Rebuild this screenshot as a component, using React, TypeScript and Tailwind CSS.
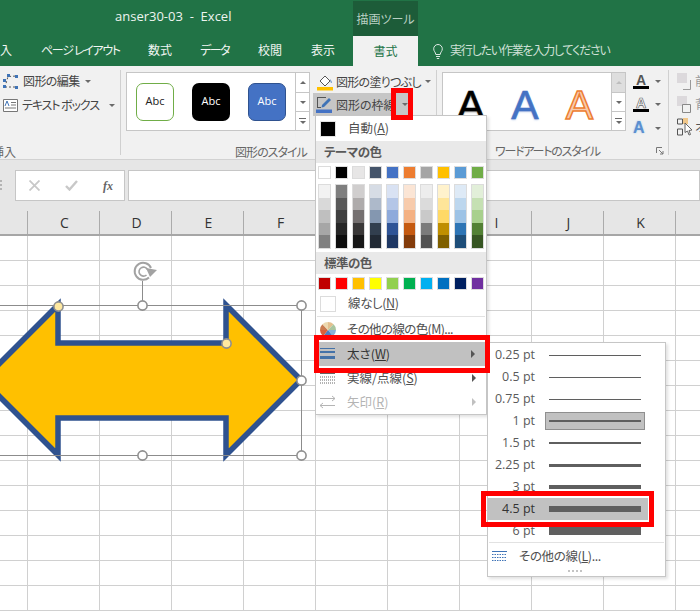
import React from 'react';

const THEME = ['#ffffff', '#000000', '#e7e6e6', '#44546a', '#4472c4', '#ed7d31', '#a5a5a5', '#ffc000', '#5b9bd5', '#70ad47'];
const SHADES = [
  ['#f2f2f2', '#d9d9d9', '#bfbfbf', '#a6a6a6', '#808080'],
  ['#7f7f7f', '#595959', '#3f3f3f', '#262626', '#0d0d0d'],
  ['#d0cece', '#aeabab', '#757070', '#3a3838', '#171717'],
  ['#d6dce5', '#adb9ca', '#8497b0', '#323f4f', '#222a35'],
  ['#d9e2f3', '#b4c6e7', '#8eaadb', '#2f5496', '#1f3864'],
  ['#fbe5d5', '#f7cbac', '#f4b183', '#c55a11', '#833c0b'],
  ['#ededed', '#dbdbdb', '#c9c9c9', '#7b7b7b', '#525252'],
  ['#fff2cc', '#fee599', '#ffd966', '#bf8f00', '#7f6000'],
  ['#deeaf6', '#bdd7ee', '#9dc3e6', '#2e75b5', '#1e4e79'],
  ['#e2efd9', '#c5e0b3', '#a8d08d', '#538135', '#375623'],
];
const STANDARD = ['#c00000', '#ff0000', '#ffc000', '#ffff00', '#92d050', '#00b050', '#00b0f0', '#0070c0', '#002060', '#7030a0'];
const WEIGHTS = [
  { label: '0.25 pt', h: 1 },
  { label: '0.5 pt', h: 1 },
  { label: '0.75 pt', h: 1 },
  { label: '1 pt', h: 2, boxed: true },
  { label: '1.5 pt', h: 2 },
  { label: '2.25 pt', h: 3 },
  { label: '3 pt', h: 4 },
  { label: '4.5 pt', h: 6, active: true },
  { label: '6 pt', h: 8 },
];
const COLUMNS = ['', 'C', 'D', 'E', 'F', 'G', 'H', 'I', 'J', 'K', ''];

function Caret({ className = '' }: { className?: string }) {
  return <span className={`block shrink-0 w-0 h-0 border-x-[3.5px] border-x-transparent border-t-[3.5px] border-t-[#6a6a6a] ${className}`} />;
}

function ScrollBtns({ firstDisabled }: { firstDisabled?: boolean }) {
  return (
    <div className="w-[14px] flex flex-col border-l border-[#c6c6c6] bg-white shrink-0">
      <div className={`h-[20px] flex items-center justify-center border-b border-[#c6c6c6] ${firstDisabled ? 'bg-[#dedede]' : ''}`}>
        <span className={`block w-0 h-0 border-x-[3.5px] border-x-transparent border-b-[3.5px] ${firstDisabled ? 'border-b-[#bdbdbd]' : 'border-b-[#6a6a6a]'}`} />
      </div>
      <div className="h-[19px] flex items-center justify-center border-b border-[#c6c6c6]">
        <Caret />
      </div>
      <div className="flex-1 flex flex-col items-center justify-center gap-[2px]">
        <span className="block w-[7px] h-px bg-[#6a6a6a]" />
        <Caret />
      </div>
    </div>
  );
}

function ThumbA({ className }: { className: string }) {
  return (
    <div className={`w-[38px] h-[38px] rounded-[7px] flex items-center justify-center text-[11px] font-['Open_Sans',sans-serif] ${className}`}>
      Abc
    </div>
  );
}

function MenuRow({ icon, label, arrow, muted, className = '' }: { icon: React.ReactNode; label: React.ReactNode; arrow?: boolean; muted?: boolean; className?: string }) {
  return (
    <div className={`flex items-center shrink-0 ${className}`}>
      <div className="w-[32px] flex justify-start pl-[4px] shrink-0">{icon}</div>
      <span className={`text-[12.5px] whitespace-nowrap ${muted ? 'text-[#b4b4b4]' : 'text-[#505050]'}`}>{label}</span>
      {arrow && (
        <span className={`ml-auto mr-[10px] block w-0 h-0 border-y-[4px] border-y-transparent border-l-[4px] ${muted ? 'border-l-[#c0c0c0]' : 'border-l-[#555]'}`} />
      )}
    </div>
  );
}

function MenuHeader({ children }: { children: React.ReactNode }) {
  return <div className="h-[22px] shrink-0 bg-[#e9e9e9] flex items-center pl-[8px] text-[12.5px] font-bold text-[#595959] tracking-[-0.04em]">{children}</div>;
}

function Swatch({ color }: { color: string }) {
  return <span className="block w-[13px] h-[13px] border border-[#dcdcdc]" style={{ background: color }} />;
}

function LineMenu() {
  return (
    <div className="absolute left-[487px] top-[342px] w-[179px] h-[235px] bg-white border border-[#c6c6c6] shadow-[2px_2px_3px_rgba(0,0,0,0.12)] flex flex-col pt-px">
      {WEIGHTS.map((w) => (
        <div key={w.label} className={`h-[22px] w-[160px] shrink-0 flex items-center ${w.active ? 'bg-[#c1c1c1]' : ''}`}>
          <span className={`w-[47px] text-right text-[12.5px] whitespace-nowrap font-['Open_Sans',sans-serif] ${w.active ? 'text-[#333]' : 'text-[#5a5a5a]'}`}>{w.label}</span>
          <div className={`ml-[10px] w-[100px] h-[18px] flex items-center justify-center ${w.boxed ? 'bg-[#c1c1c1] border border-[#8f8f8f]' : ''}`}>
            <span className="block w-[92px] bg-[#5f5f5f]" style={{ height: w.h }} />
          </div>
        </div>
      ))}
      <div className="h-px bg-[#e2e2e2] mx-px shrink-0" />
      <MenuRow
        className="h-[26px]"
        icon={
          <svg width="15" height="12" viewBox="0 0 15 12" className="shrink-0">
            <path d="M0 1.500h15" stroke="#3f73b6" strokeWidth="1" />
            <path d="M0 4.500h15M0 7.500h15M0 10.500h15" stroke="#3f73b6" strokeWidth="1" strokeDasharray="1.500 1" />
          </svg>
        }
        label={<span className="tracking-[-0.03em] ml-[-1px]">その他の線(<span className="underline">L</span>)...</span>}
      />
      <div className="flex justify-center gap-[2px] ml-[-4px] mt-[1px]">
        {[0, 1, 2, 3].map((i) => (
          <span key={i} className="block w-[2px] h-[2px] bg-[#c4c4c4]" />
        ))}
      </div>
    </div>
  );
}

function ColorMenu() {
  return (
    <div className="absolute left-[315px] top-[115px] w-[172px] h-[300px] bg-white border border-[#c6c6c6] shadow-[2px_2px_3px_rgba(0,0,0,0.12)] flex flex-col">
      <MenuRow
        className="h-[25px]"
        icon={<span className="block w-[16px] h-[16px] bg-black border border-[#e2e2e2]" />}
        label={<>自動(<span className="underline">A</span>)</>}
      />
      <MenuHeader>テーマの色</MenuHeader>
      <div className="flex gap-[4px] pl-[2px] mt-[3px]">
        {THEME.map((c) => (
          <Swatch key={c} color={c} />
        ))}
      </div>
      <div className="flex gap-[4px] pl-[2px] mt-[5px]">
        {SHADES.map((col) => (
          <div key={col[0]} className="w-[13px] h-[65px] flex flex-col border border-[#dcdcdc]">
            {col.map((c) => (
              <span key={c} className="block flex-1" style={{ background: c }} />
            ))}
          </div>
        ))}
      </div>
      <div className="mt-[3px]">
        <MenuHeader>標準の色</MenuHeader>
      </div>
      <div className="flex gap-[4px] pl-[2px] mt-[3px]">
        {STANDARD.map((c) => (
          <Swatch key={c} color={c} />
        ))}
      </div>
      <MenuRow
        className="h-[25px] mt-[1px]"
        icon={<span className="block w-[16px] h-[16px] bg-white border border-[#dcdcdc]" />}
        label={<span className="tracking-[-0.03em]">線なし(<span className="underline">N</span>)</span>}
      />
      <div className="h-px bg-[#e2e2e2] mx-px shrink-0" />
      <MenuRow
        className="h-[25px]"
        icon={
          <svg width="16" height="16" viewBox="0 0 16 16" className="shrink-0">
            <path d="M8 8V0a8 8 0 0 1 5.600 2.300z" fill="#e3c08f" />
            <path d="M8 8l5.600-5.700A8 8 0 0 1 16 8z" fill="#a9c6a0" />
            <path d="M8 8h8a8 8 0 0 1-3 6.200z" fill="#8ab1d8" />
            <path d="M8 8l5 6.200A8 8 0 0 1 3 14.200z" fill="#4f7fc0" />
            <path d="M8 8l-5 6.200A8 8 0 0 1 0 8z" fill="#d9603a" />
            <path d="M8 8H0a8 8 0 0 1 2.400-5.700z" fill="#c97b50" />
            <path d="M8 8L2.400 2.300A8 8 0 0 1 8 0z" fill="#ecd9b0" />
          </svg>
        }
        label={<span className="tracking-[-0.05em] ml-[-1px]">その他の線の色(<span className="underline">M</span>)...</span>}
      />
      <MenuRow
        className="h-[24px] bg-[#c1c1c1] mx-px"
        icon={
          <svg width="15" height="14" viewBox="0 0 15 14" className="shrink-0 ml-[-1px]">
            <path d="M0 1.500h15" stroke="#4472a8" strokeWidth="1" />
            <path d="M0 5h15" stroke="#4472a8" strokeWidth="2" />
            <path d="M0 10.500h15" stroke="#4472a8" strokeWidth="3" />
          </svg>
        }
        label={<span className="text-[#333] ml-[-2px]">太さ(<span className="underline">W</span>)</span>}
        arrow
      />
      <MenuRow
        className="h-[24px]"
        icon={
          <svg width="15" height="12" viewBox="0 0 15 12" className="shrink-0">
            <path d="M0 1.500h15" stroke="#666" />
            <path d="M0 5h15M0 8h15M0 11h15" stroke="#666" strokeDasharray="1 1" />
          </svg>
        }
        label={<span className="ml-[-1px]">実線/点線(<span className="underline">S</span>)</span>}
        arrow
      />
      <MenuRow
        className="h-[24px]"
        muted
        icon={
          <svg width="15" height="14" viewBox="0 0 15 14" fill="none" stroke="#b4b4b4" className="shrink-0">
            <path d="M0 3.500h15M12 1l3 2.500L12 6M0 10.500h15M3 8l-3 2.500L3 13" />
          </svg>
        }
        label={<span className="ml-[-1px]">矢印(<span className="underline">R</span>)</span>}
        arrow
      />
    </div>
  );
}

function Sheet() {
  const rows = Array.from({ length: 15 });
  return (
    <div className="flex-1 bg-white grid grid-cols-[28px_repeat(10,72px)] auto-rows-[25px] overflow-hidden">
      {rows.map((_, r) =>
        COLUMNS.map((_, c) => <div key={`${r}-${c}`} className="border-r border-b border-[#d0d0d0]" />)
      )}
    </div>
  );
}

function Selection() {
  const handles = [
    [142, 305],
    [301, 305],
    [301, 380],
    [142, 455],
    [301, 455],
  ];
  return (
    <svg className="absolute left-0 top-[250px]" width="320" height="225" viewBox="0 250 320 225">
      <path
        d="M301 380L226 305V343H58V305L-17 380L58 455V418H226V455Z"
        fill="#ffc000"
        stroke="#2f528f"
        strokeWidth="5.500"
      />
      <path d="M-2 305.500H301.500V455.500H-2M142.500 281V300" fill="none" stroke="#8c8c8c" />
      <path d="M149 277.500A8.500 8.500 0 1 1 151 268" fill="none" stroke="#a2a2a2" strokeWidth="2" />
      <path d="M146.500 275A4.500 4.500 0 1 1 147.500 269.500" fill="none" stroke="#a2a2a2" strokeWidth="1.600" />
      <path d="M157 270L146 268L150 277Z" fill="#a2a2a2" />
      {handles.map(([x, y]) => (
        <circle key={`${x}-${y}`} cx={x + 0.5} cy={y + 0.5} r="4.600" fill="#fff" stroke="#8f8f8f" strokeWidth="1.600" />
      ))}
      <circle cx="58.500" cy="306.500" r="4.600" fill="#ffe9a0" stroke="#8f8f8f" strokeWidth="1.600" />
      <circle cx="226.500" cy="343.500" r="4.600" fill="#ffe9a0" stroke="#8f8f8f" strokeWidth="1.600" />
    </svg>
  );
}

export default function App() {
  return (
    <div className="relative w-[700px] h-[611px] overflow-hidden flex flex-col bg-white font-['Noto_Sans_CJK_JP','Noto_Sans',sans-serif] [font-feature-settings:'palt'] text-[#444]">
      {/* title bar */}
      <div className="h-[66px] shrink-0 bg-[#217346] flex flex-col">
        <div className="h-[36px] flex">
          <span className="ml-[115px] mt-[7px] text-[13px] text-[#eef4f0] whitespace-pre font-['Open_Sans',sans-serif]">anser30-03  -  Excel</span>
          <div className="absolute left-[353px] top-px w-[65px] h-[35px] bg-[#1d5c39] flex items-center justify-center text-[12px] text-[#b9d0c3]">描画ツール</div>
        </div>
        <div className="h-[30px] flex items-center text-[12px] text-[#f1f6f3]">
          <span className="w-[12px] mt-[-2px]">入</span>
          <span className="ml-[29px] w-[78px] mt-[-2px] whitespace-nowrap tracking-[-0.11em]">ページ レイアウト</span>
          <span className="ml-[29px] w-[24px] mt-[-2px] whitespace-nowrap">数式</span>
          <span className="ml-[28px] w-[29px] mt-[-2px] whitespace-nowrap tracking-[-0.12em]">データ</span>
          <span className="ml-[29px] w-[24px] mt-[-2px] whitespace-nowrap">校閲</span>
          <span className="ml-[29px] w-[24px] mt-[-2px] whitespace-nowrap">表示</span>
          <span className="ml-[18px] w-[65px] h-full bg-[#f1f1f1] text-[#217346] flex items-center justify-center">書式</span>
          <svg className="ml-[15px] shrink-0" width="10" height="15" viewBox="0 0 10 15" fill="none" stroke="#dfeae4">
            <path d="M2.800 10.500C2.600 8 .7 7.500.7 4.800a4.300 4.300 0 0 1 8.600 0C9.300 7.500 7.400 8 7.200 10.500zM3 12.500h4M3.800 14.500h2.400" />
          </svg>
          <span className="ml-[7px] mt-[-2px] text-[#cfe0d6] whitespace-nowrap tracking-[-0.1em]">実行したい作業を入力してください</span>
        </div>
      </div>

      {/* ribbon */}
      <div className="h-[94px] shrink-0 bg-[#f1f1f1] border-b border-[#d2d2d2] flex text-[12px] text-[#444]">
        <div className="w-[121px] shrink-0 my-[4px] border-r border-[#d0d0d0] flex flex-col pl-[3px]">
          <div className="h-[24px] mt-[-1px] flex items-center">
            <svg width="16" height="15" viewBox="0 0 16 15" fill="none" className="shrink-0">
              <path d="M2 13L5 2.500L14 2M2 13L13 13" stroke="#555" strokeDasharray="2 2" />
              <path d="M0 11h3v3H0zM4 0h3v3H4zM12 1h3v3h-3zM0 5h3v3H0zM12 12h3v3h-3z" fill="#3f73b6" />
            </svg>
            <span className="ml-[4px] whitespace-nowrap tracking-[-0.05em]">図形の編集</span>
            <Caret className="ml-[5px]" />
          </div>
          <div className="h-[24px] flex items-center">
            <svg width="15" height="13" viewBox="0 0 15 13" fill="none" className="shrink-0">
              <path d="M.5.500h14v12H.5z" fill="#fff" stroke="#777" />
              <path d="M8 3.500h5M8 6h5M2 9h11" stroke="#777" />
              <path d="M2 7L4 2l2 5" stroke="#3f73b6" />
            </svg>
            <span className="ml-[4px] whitespace-nowrap tracking-[-0.09em]">テキスト ボックス</span>
            <Caret className="ml-[10px]" />
          </div>
          <span className="mt-auto mb-[-4px] ml-[-11px] h-[16px] text-[#666] whitespace-nowrap">挿入</span>
        </div>

        <div className="w-[316px] shrink-0 my-[4px] border-r border-[#d0d0d0] flex flex-col pl-[5px]">
          <div className="flex">
            <div className="w-[184px] h-[59px] mt-[2px] bg-white border border-[#c6c6c6] flex shrink-0">
              <div className="flex-1 flex items-center gap-[18px] pl-[9px]">
                <ThumbA className="bg-white border border-[#70ad47] text-[#222]" />
                <ThumbA className="bg-black text-white" />
                <ThumbA className="bg-[#4472c4] border border-[#2f528f] text-white" />
              </div>
              <ScrollBtns />
            </div>
            <div className="ml-[4px] flex flex-col">
              <div className="h-[23px] flex items-center pl-[3px]">
                <svg width="16" height="18" viewBox="0 0 16 18" className="shrink-0">
                  <path d="M3 8L8 3l5 5-5 5z" fill="#fff" stroke="#555" />
                  <path d="M13 6c2 2 2 4 1.500 4-1 0-1-2-1.500-4z" fill="#4f81bd" />
                  <path d="M0 14h16v3.500H0z" fill="#ffc000" />
                </svg>
                <span className="ml-[3px] whitespace-nowrap tracking-[-0.06em]">図形の塗りつぶし</span>
                <Caret className="ml-[4px]" />
              </div>
              <div className="h-[23px] w-[97px] ml-[-1px] bg-[#c6c6c6] flex items-center pl-[3px]">
                <svg width="18" height="18" viewBox="0 0 18 18" fill="none" className="shrink-0">
                  <path d="M1 1.500h9M1.500 1v10M1 11.500h4" stroke="#555" />
                  <path d="M5.500 11.500L6 9l7-7 2 2-7 7z" fill="#3f73b6" />
                  <path d="M0 13.500h16V17H0z" fill="#4472c4" />
                </svg>
                <span className="ml-[2px] whitespace-nowrap">図形の枠線</span>
                <Caret className="ml-[6px]" />
              </div>
            </div>
          </div>
          <span className="mt-auto mb-[-4px] ml-[109px] h-[16px] text-[#666] whitespace-nowrap tracking-[-0.08em]">図形のスタイル</span>
        </div>

        <div className="w-[232px] shrink-0 my-[4px] border-r border-[#d0d0d0] flex flex-col pl-[5px]">
          <div className="flex">
            <div className="w-[184px] h-[59px] mt-[2px] bg-white border border-[#c6c6c6] flex shrink-0 overflow-hidden">
              <div className="flex-1 flex items-end pb-[4px] pl-[14px] gap-[27px] font-['Liberation_Sans',sans-serif] text-[41px] leading-[41px]">
                <span className="text-black [-webkit-text-stroke:0.6px_#000] [text-shadow:0_1px_2px_rgba(0,0,0,0.5)]">A</span>
                <span className="text-[#4472c4] [-webkit-text-stroke:0.6px_#4472c4] [text-shadow:0_1px_2px_rgba(68,114,196,0.4)]">A</span>
                <span className="text-[#f8cbad] [-webkit-text-stroke:1.5px_#ed7d31]">A</span>
              </div>
              <ScrollBtns firstDisabled />
            </div>
            <div className="ml-[7px] flex flex-col font-['Liberation_Sans',sans-serif]">
              <div className="h-[22px] flex items-center">
                <div className="w-[16px] flex flex-col items-center leading-none">
                  <span className="text-[14px] h-[13px] font-bold text-[#555]">A</span>
                  <span className="block w-[16px] h-[3px] bg-black" />
                </div>
                <Caret className="ml-[6px]" />
              </div>
              <div className="h-[24px] flex items-center">
                <div className="w-[16px] flex flex-col items-center leading-none">
                  <span className="text-[14px] h-[13px] font-bold text-white [-webkit-text-stroke:0.7px_#666]">A</span>
                  <span className="block w-[16px] h-[3px] bg-black" />
                </div>
                <Caret className="ml-[6px]" />
              </div>
              <div className="h-[24px] flex items-center">
                <span className="w-[14px] text-[16px] font-bold text-[#5b8fd0] [text-shadow:0_0_2px_#9dc3e6]">A</span>
                <Caret className="ml-[8px]" />
              </div>
            </div>
          </div>
          <div className="mt-auto mb-[-4px] h-[16px] flex items-center">
            <span className="ml-[53px] text-[#666] whitespace-nowrap tracking-[-0.1em]">ワードアートのスタイル</span>
            <svg className="ml-auto mr-[4px] shrink-0" width="8" height="8" viewBox="0 0 8 8" fill="none" stroke="#777">
              <path d="M.5 6V.5H6M3 3l4 4M7 4v3H4" />
            </svg>
          </div>
        </div>

        <div className="flex-1 flex flex-col pl-[8px] pt-[6px] gap-[5px] text-[#9a9a9a]">
          <div className="flex items-center h-[18px]">
            <svg width="14" height="17" viewBox="0 0 14 17" fill="none" className="shrink-0">
              <path d="M0 0h10v10H0z" fill="#dcd9dc" />
              <path d="M13.500 7v9.500H6" stroke="#999" />
            </svg>
            <span className="ml-[4px]">前</span>
          </div>
          <div className="flex items-center h-[18px]">
            <svg width="14" height="17" viewBox="0 0 14 17" fill="none" className="shrink-0">
              <path d="M0 0h10v10H0z" fill="#dcd9dc" />
              <path d="M5.500 8.500h8v8h-8z" fill="#f1f1f1" stroke="#888" />
            </svg>
            <span className="ml-[4px]">背</span>
          </div>
          <div className="flex items-center h-[18px] text-[#555]">
            <svg width="16" height="18" viewBox="0 0 16 18" fill="none" className="shrink-0">
              <path d="M.5 1h5v5h-5zM.5 11h5v6h-5z" stroke="#555" />
              <path d="M6 0h5v6H6z" fill="#f0c78a" />
              <path d="M8 5l7 7-3 .5 1.500 4-1.500.5-1.500-4L8 14.500z" fill="#fff" stroke="#666" />
            </svg>
            <span className="ml-[2px]">オ</span>
          </div>
        </div>
      </div>

      {/* formula bar */}
      <div className="h-[51px] shrink-0 bg-[#e6e6e6] flex pt-[10px]">
        <div className="w-[15px] flex flex-col items-start gap-[2px] pt-[10px]">
          <span className="block w-[2px] h-[2px] bg-[#b4b4b4]" />
          <span className="block w-[2px] h-[2px] bg-[#b4b4b4]" />
          <span className="block w-[2px] h-[2px] bg-[#b4b4b4]" />
        </div>
        <div className="w-[110px] h-[31px] bg-white border border-[#c6c6c6] flex items-center">
          <svg className="ml-[13px] shrink-0" width="11" height="11" viewBox="0 0 11 11" stroke="#c8c8c8" strokeWidth="1.800">
            <path d="M.5.500l10 10M10.500.500l-10 10" />
          </svg>
          <svg className="ml-[25px] shrink-0" width="13" height="11" viewBox="0 0 13 11" fill="none" stroke="#c8c8c8" strokeWidth="2.400">
            <path d="M1 6l3.500 3.500L12 1" />
          </svg>
          <span className="ml-[25px] text-[12px] italic font-bold text-[#666] font-['Liberation_Serif',serif]">fx</span>
        </div>
        <div className="ml-[3px] flex-1 h-[31px] bg-white border border-[#c6c6c6]" />
      </div>

      {/* column headers */}
      <div className="h-[25px] shrink-0 bg-[#e6e6e6] border-b-2 border-[#a6a6a6] flex text-[14px] text-[#333] font-['Open_Sans',sans-serif]">
        {COLUMNS.map((c, i) => (
          <div
            key={i}
            className={`${i === 0 ? 'w-[28px]' : 'w-[72px]'} shrink-0 border-r border-[#ababab] flex items-center justify-center pl-[2px]`}
          >
            {c === 'G' || c === 'H' ? '' : c}
          </div>
        ))}
      </div>

      <Sheet />
      <Selection />
      <ColorMenu />
      <LineMenu />

      {/* red callouts */}
      <div className="absolute left-[391px] top-[88px] w-[22px] h-[32px] border-[5px] border-[#ff0000]" />
      <div className="absolute left-[314px] top-[335px] w-[176px] h-[38px] border-[5px] border-[#ff0000]" />
      <div className="absolute left-[481px] top-[491px] w-[173px] h-[36px] border-[5px] border-[#ff0000]" />
    </div>
  );
}
